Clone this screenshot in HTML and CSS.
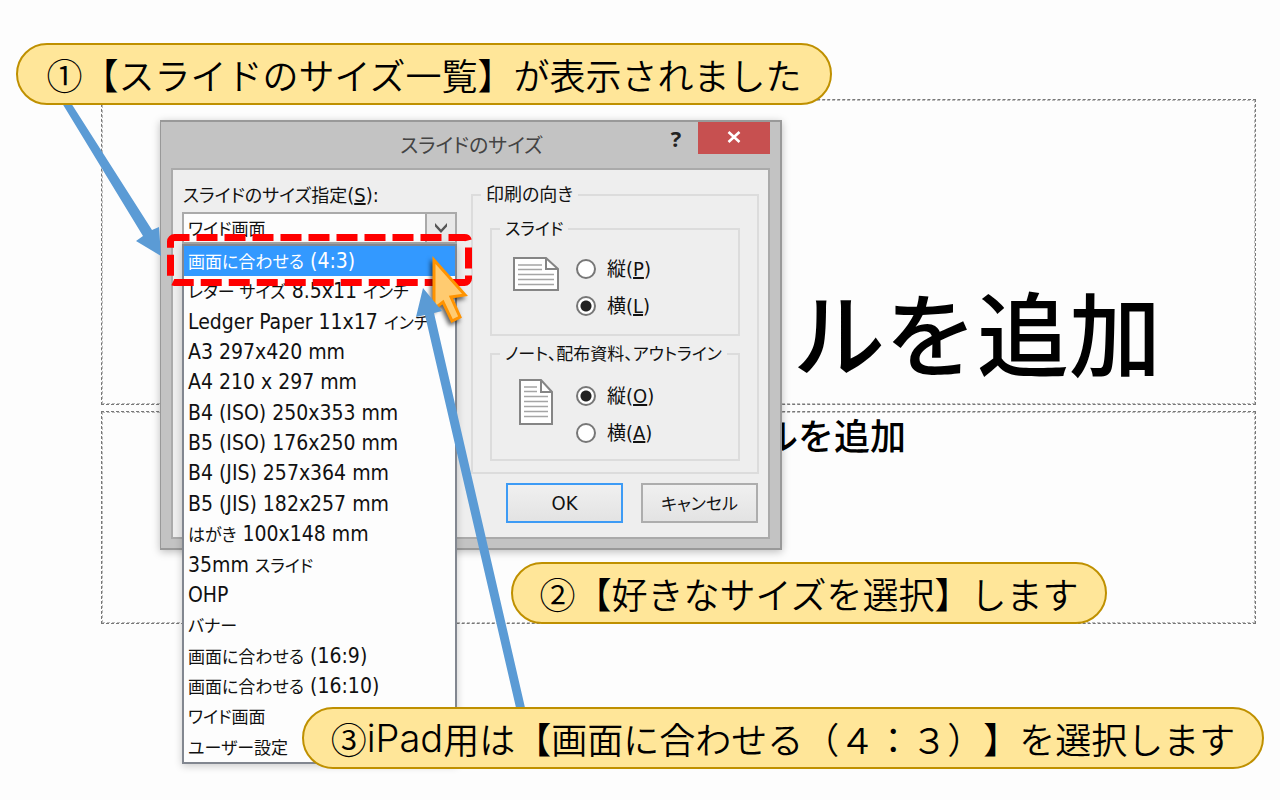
FILE: index.html
```html
<!DOCTYPE html>
<html lang="ja">
<head>
<meta charset="utf-8">
<title>スライドのサイズ</title>
<link rel="stylesheet" href="styles.css">
</head>
<body>
<main class="slide">
  <section class="placeholder placeholder-title"><h1 class="slide-title">トルを追加</h1></section>
  <section class="placeholder placeholder-sub"><p class="slide-sub">ルを追加</p></section>
</main>

<form class="dialog" role="dialog" aria-labelledby="dlg-title">
  <header class="titlebar">
    <h2 class="dialog-title" id="dlg-title">スライドのサイズ</h2>
    <button class="help" type="button" aria-label="ヘルプ">?</button>
    <button class="close" type="button" aria-label="閉じる">
      <svg width="14" height="12" viewBox="0 0 14 12"><path d="M1.500 1L12.500 11M12.500 1L1.500 11" stroke="#fff" stroke-width="2.600"/></svg>
    </button>
  </header>
  <div class="client">
    <div class="size-field">
      <label class="size-label" for="size"><span class="jp">スライドのサイズ指定</span>(<u>S</u>):</label>
      <div class="combo">
        <select class="size-select" id="size"><option>ワイド画面</option></select>
        <span class="combo-arrow"><svg width="14" height="12" viewBox="0 0 14 12"><path d="M1 1L7 7.500L13 1V4.500L7 11L1 4.500Z" fill="#555"/></svg></span>
        <ul class="options" role="listbox" aria-label="スライドのサイズ">
          <li class="option option-selected" role="option" aria-selected="true"><span class="jp">画面に合わせる</span> (4:3)</li>
          <li class="option" role="option"><span class="jp">レター サイズ</span> 8.5x11 <span class="jp">インチ</span></li>
          <li class="option" role="option">Ledger Paper 11x17 <span class="jp">インチ</span></li>
          <li class="option" role="option">A3 297x420 mm</li>
          <li class="option" role="option">A4 210 x 297 mm</li>
          <li class="option" role="option">B4 (ISO) 250x353 mm</li>
          <li class="option" role="option">B5 (ISO) 176x250 mm</li>
          <li class="option" role="option">B4 (JIS) 257x364 mm</li>
          <li class="option" role="option">B5 (JIS) 182x257 mm</li>
          <li class="option" role="option"><span class="jp">はがき</span> 100x148 mm</li>
          <li class="option" role="option">35mm <span class="jp">スライド</span></li>
          <li class="option" role="option">OHP</li>
          <li class="option" role="option"><span class="jp">バナー</span></li>
          <li class="option" role="option"><span class="jp">画面に合わせる</span> (16:9)</li>
          <li class="option" role="option"><span class="jp">画面に合わせる</span> (16:10)</li>
          <li class="option" role="option"><span class="jp">ワイド画面</span></li>
          <li class="option" role="option"><span class="jp">ユーザー設定</span></li>
        </ul>
      </div>
    </div>
    <div class="side">
      <fieldset class="group group-outer">
        <legend class="legend">印刷の向き</legend>
        <fieldset class="group group-inner">
          <legend class="legend">スライド</legend>
          <div class="orient">
            <div class="page-icon"><svg width="46" height="34" viewBox="0 0 46 34"><path d="M1 1H33L45 12V33H1Z" fill="#fff" stroke="#858585" stroke-width="2"/><path d="M33 1V12H45" fill="none" stroke="#858585" stroke-width="2"/><path d="M5 8H29M5 12.500H29M5 17.500H41M5 22.500H41M5 27.500H41" stroke="#a5a5a5" stroke-width="1.500"/></svg></div>
            <div class="radios">
              <label class="choice"><input class="radio" type="radio" name="slide"><span class="jp">縦</span>(<u>P</u>)</label>
              <label class="choice"><input class="radio" type="radio" name="slide" checked><span class="jp">横</span>(<u>L</u>)</label>
            </div>
          </div>
        </fieldset>
        <fieldset class="group group-inner">
          <legend class="legend">ノート、配布資料、アウトライン</legend>
          <div class="orient">
            <div class="page-icon"><svg width="34" height="46" viewBox="0 0 34 46"><path d="M1 1H22L33 13V45H1Z" fill="#fff" stroke="#858585" stroke-width="2"/><path d="M22 1V13H33" fill="none" stroke="#858585" stroke-width="2"/><path d="M5 8H18M5 12.500H18M5 17.500H29M5 22.500H29M5 27.500H29M5 32.500H29M5 37.500H29" stroke="#a5a5a5" stroke-width="1.500"/></svg></div>
            <div class="radios">
              <label class="choice"><input class="radio" type="radio" name="notes" checked><span class="jp">縦</span>(<u>O</u>)</label>
              <label class="choice"><input class="radio" type="radio" name="notes"><span class="jp">横</span>(<u>A</u>)</label>
            </div>
          </div>
        </fieldset>
      </fieldset>
      <div class="actions">
        <button class="btn btn-default" type="button">OK</button>
        <button class="btn" type="button"><span class="jp">キャンセル</span></button>
      </div>
    </div>
  </div>
</form>

<svg class="marks" width="1280" height="800" viewBox="0 0 1280 800" aria-hidden="true">
  <rect x="170.500" y="237.500" width="298" height="45" rx="4" fill="none" stroke="#f00" stroke-width="7" stroke-dasharray="21 7" stroke-dashoffset="6"/>
  <path class="cursor" d="M434 260L465 295L451 297L460 317L452 321L443 302L434 309Z" fill="#ffcb70" stroke="#ff9300" stroke-width="3"/>
  <path d="M62 103L71 103L152 230L159 227L161 256L136 241L143 236Z" fill="#5b9bd5"/>
  <path d="M423 288L442 311L434 313L526 712H517L425 315L416 317Z" fill="#5b9bd5"/>
</svg>

<p class="callout callout-1">①【スライドのサイズ一覧】が表示されました</p>
<p class="callout callout-2">②【好きなサイズを選択】します</p>
<p class="callout callout-3">③<span class="latin">iPad</span>用は【画面に合わせる（４：３）】を選択します</p>
</body>
</html>
```
FILE: styles.css
```css
* { box-sizing: border-box; }
body {
  margin: 0;
  min-height: 100vh;
  position: relative;
  background: #fdfdfd;
  color: #111;
  font: 20px/30px "DejaVu Sans Condensed", "Noto Sans CJK JP", sans-serif;
}
h1, h2, p, ul { margin: 0; padding: 0; }

.slide {
  display: grid;
  grid-template-columns: minmax(0, 1fr);
  gap: 6px;
  padding: 99px 24px 0 101px;
}
.placeholder {
  border: 1px dashed #777;
  outline: 1px dashed #bbb;
  outline-offset: -2px;
  color: #000;
  text-align: right;
  white-space: nowrap;
  font-family: "Noto Sans CJK JP", sans-serif;
}
.placeholder-title { min-height: 306px; padding: 162px 94px 0 0; }
.placeholder-sub { min-height: 213px; padding-right: 349px; }
.slide-title {
  font-size: 92px;
  font-weight: 500;
  line-height: 136px;
}
.slide-sub { font-size: 36px; font-weight: 500; line-height: 44px; }

.dialog {
  position: absolute;
  left: 160px;
  top: 120px;
  width: 622px;
  padding: 0 10px 9px;
  background: #c3c3c3;
  border: 2px solid #999;
  border-left-width: 1px;
  box-shadow: 0 2px 8px rgba(0, 0, 0, .25);
  font-feature-settings: "palt";
}
.jp { font-size: 17px; }
.titlebar {
  display: flex;
  align-items: flex-start;
  height: 46px;
}
.dialog-title {
  flex: 1;
  padding: 9px 0 0 118px;
  text-align: center;
  color: #444;
  font-size: 20px;
  font-weight: 400;
}
.help, .close { border: 0; padding: 0; height: 32px; }
.help {
  width: 44px;
  background: transparent;
  color: #222;
  font: bold 22px/30px "Open Sans", sans-serif;
}
.close { width: 72px; background: #c75050; }
.client {
  display: flex;
  justify-content: space-between;
  padding: 10px 9px 14px;
  background: #eee;
  border: 2px solid #aaa;
}
.size-field { width: 275px; }
.size-label { display: block; height: 32px; padding-left: 1px; }
.size-label .jp { font-size: 18px; line-height: 26px; }
.combo { position: relative; }
.size-select {
  appearance: none;
  display: block;
  width: 100%;
  height: 32px;
  padding: 0 4px;
  border: 2px solid #aaa;
  border-radius: 0;
  background: #fdfdfd;
  color: inherit;
  font: inherit;
  font-size: 17px;
}
.combo-arrow {
  position: absolute;
  right: 0;
  top: 0;
  width: 32px;
  height: 32px;
  display: grid;
  place-items: center;
  border: 2px solid #aaa;
  background: #e8e8e8;
  pointer-events: none;
}
.options {
  position: absolute;
  left: 0;
  right: 0;
  top: 32px;
  display: grid;
  grid-auto-rows: 1fr;
  min-height: 520px;
  border: 2px solid #828790;
  background: #fdfdfd;
  box-shadow: 0 2px 8px rgba(0, 0, 0, .2);
  list-style: none;
  white-space: nowrap;
  font-size: 21px;
  line-height: 28px;
}
.option { padding: 1px 0 0 4px; }
.option .jp { line-height: 20px; }
.option-selected { background: #3399ff; color: #fff; }

.side { width: 288px; }
.group {
  margin: 0;
  min-width: 0;
  border: 2px solid #dcdcdc;
}
.legend { padding: 0 5px; font-size: 18px; white-space: nowrap; }
.group-outer { padding: 4px 17px 11px; }
.group-inner { padding: 0 0 10px; }
.group-inner + .group-inner { margin-top: 3px; padding-bottom: 8px; }
.group-outer > .legend { margin-left: -9px; }
.group-inner > .legend { margin-left: 8px; font-size: 17px; }
.orient { display: flex; padding-top: 6px; }
.group-inner + .group-inner .orient { padding-top: 8px; }
.page-icon {
  width: 84px;
  padding: 7px 0 0 4px;
}
.group-inner + .group-inner .page-icon { padding-top: 2px; }
.page-icon svg { display: block; margin: 0 auto; }
.choice {
  display: flex;
  align-items: center;
  height: 37px;
}
.radio {
  appearance: none;
  width: 20px;
  height: 20px;
  margin: 0 11px 0 0;
  border: 2px solid #777;
  border-radius: 50%;
  background: #fff;
}
.radio:checked { background: radial-gradient(circle, #222 5px, #fff 6px); }
.choice .jp { font-size: 19px; }
.actions {
  display: flex;
  justify-content: flex-end;
  gap: 18px;
  padding: 9px 1px 0 0;
}
.btn {
  width: 117px;
  height: 40px;
  padding: 0;
  border: 2px solid #adadad;
  background: linear-gradient(#f0f0f0, #e3e3e3);
  color: inherit;
  font: inherit;
  font-feature-settings: "palt";
}
.btn-default { border-color: #3d9bf5; }

.marks { position: absolute; left: 0; top: 0; pointer-events: none; }
.cursor { filter: drop-shadow(-2px 3px 2px rgba(0, 0, 0, .6)); }

.callout {
  position: absolute;
  display: flex;
  align-items: center;
  justify-content: center;
  height: 62px;
  padding: 0 20px;
  border: 2px solid #bf9000;
  border-radius: 32px;
  background: #ffe699;
  color: #000;
  font: 350 36px/54px "Noto Sans CJK JP", sans-serif;
  text-spacing-trim: space-all;
  white-space: nowrap;
}
.latin { font: 300 38px/54px Inter, sans-serif; }
.callout-1 { left: 16px; top: 43px; width: 816px; }
.callout-2 { left: 511px; top: 562px; width: 596px; }
.callout-3 { left: 302px; top: 707px; width: 962px; }
```
